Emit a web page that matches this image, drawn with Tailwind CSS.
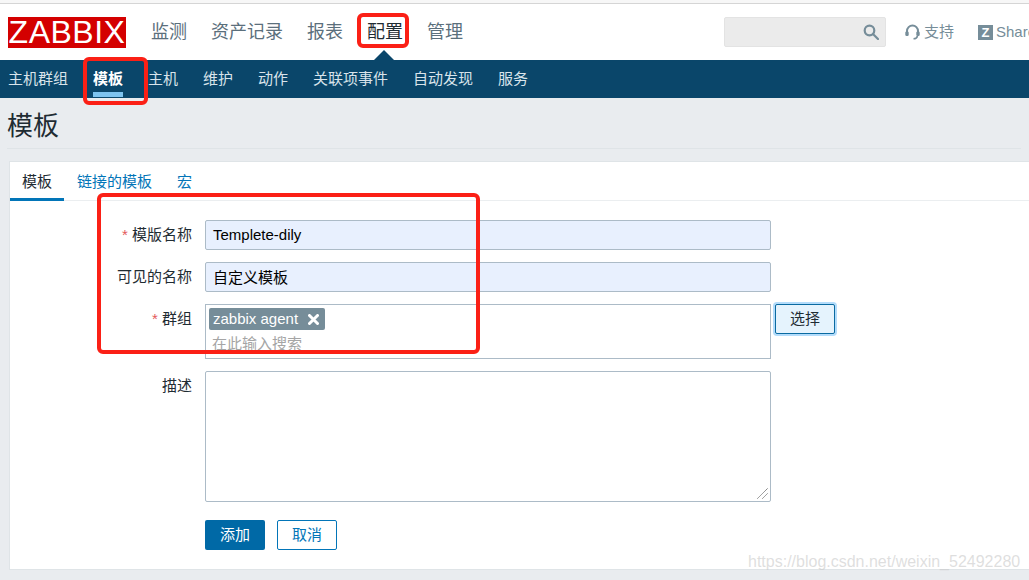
<!DOCTYPE html>
<html>
<head>
<meta charset="utf-8">
<script src="https://cdn.jsdelivr.net/npm/@tailwindcss/browser@4"></script>
</head>
<body class="relative w-[1029px] h-[580px] overflow-hidden bg-[#e9ecef] font-['Liberation_Sans','Noto_Sans_CJK_SC',sans-serif] text-[15px] text-[#1f2c33]">
<div class="h-[4px] bg-[#f7f7f7] border-b border-[#d5d5d5]"></div>
<header class="h-[56px] bg-white flex items-center pl-[8px] relative whitespace-nowrap overflow-hidden">
  <div class="shrink-0 w-[118px] h-[31px] bg-[#d40000] text-white text-[32px] leading-[31px] text-center tracking-[0.5px] font-['Liberation_Sans',sans-serif]">ZABBIX</div>
  <nav class="shrink-0 flex text-[18px] text-[#5b6f7c] ml-[25px] gap-[24px]">
    <span>监测</span><span>资产记录</span><span>报表</span><span class="text-[#1f2c33]">配置</span><span>管理</span>
  </nav>
  <div class="shrink-0 ml-[261px] w-[162px] h-[30px] bg-[#ebebeb] border border-[#e3e3e3] rounded-[2px] flex items-center justify-end pr-[6px]">
    <svg width="16" height="16" viewBox="0 0 16 16" fill="none" stroke="#768d99" stroke-width="2.2"><circle cx="6.5" cy="6.5" r="4.8"/><path d="M10 10l5 5" stroke-linecap="round"/></svg>
  </div>
  <div class="shrink-0 ml-[19px] flex items-center gap-[4px] text-[15px] text-[#768d99]">
    <svg width="15" height="16" viewBox="0 0 15 16" fill="none" stroke="#768d99" stroke-width="2"><path d="M2 10V7a5.5 5.5 0 0 1 11 0v3"/><rect x="0.3" y="7.5" width="3.4" height="4.5" rx="1.2" fill="#768d99" stroke="none"/><rect x="11.3" y="7.5" width="3.4" height="4.5" rx="1.2" fill="#768d99" stroke="none"/><path d="M12.5 12c-.5 2-2 2.8-4 2.8" stroke-width="1.6"/></svg>
    <span>支持</span>
  </div>
  <div class="shrink-0 ml-[24px] flex items-center gap-[3px] text-[15px] text-[#768d99]">
    <span class="w-[15px] h-[15px] bg-[#768d99] text-white text-[13px] leading-[15px] font-bold text-center">Z</span>
    <span>Share</span>
  </div>
</header>
<nav class="relative h-[38px] bg-[#0a466a] flex text-[15px] text-[#d9e4eb] pl-[8px] whitespace-nowrap">
  <div class="flex gap-[25px] items-center h-[38px]">
    <span>主机群组</span>
    <span class="relative text-white font-bold h-full leading-[38px]">模板<i class="absolute left-0 right-0 bottom-[1px] h-[5px] bg-[#7dc3ef]"></i></span>
    <span>主机</span><span>维护</span><span>动作</span><span>关联项事件</span><span>自动发现</span><span>服务</span>
  </div>
  <i class="absolute left-[374px] -top-[10px] w-0 h-0 border-x-[10px] border-x-transparent border-b-[10px] border-b-[#0a466a]"></i>
</nav>
<main class="px-[8px]">
  <h1 class="h-[51px] pt-[11px] -ml-[1px] text-[26px] leading-[34px] font-normal text-[#1f2c33] border-b border-[#dfe4e7]">模板</h1>
  <section class="mt-[12px] -mr-[8px] ml-[1px] h-[409px] bg-white border-y border-l border-[#dfe4e7]">
    <div class="flex h-[39px] border-b border-[#ebeef0] text-[15px] text-[#0275b8]">
      <span class="w-[54px] text-center leading-[40px] text-[#1f2c33] border-b-[3px] border-[#0275b8] h-[39px]">模板</span>
      <span class="ml-[13px] leading-[40px]">链接的模板</span>
      <span class="ml-[25px] leading-[40px]">宏</span>
    </div>
    <form class="pt-[19px] pl-[195px]">
      <div class="relative h-[30px] mb-[12px]">
        <label class="absolute right-[100%] mr-[13px] top-[4px] whitespace-nowrap"><span class="text-[#e45959]">*</span> 模版名称</label>
        <div class="w-[566px] h-[30px] bg-[#e8f0fe] border border-[#acbbc7] rounded-[2px] px-[7px] leading-[28px] text-[15px] text-black">Templete-dily</div>
      </div>
      <div class="relative h-[30px] mb-[12px]">
        <label class="absolute right-[100%] mr-[13px] top-[4px] whitespace-nowrap">可见的名称</label>
        <div class="w-[566px] h-[30px] bg-[#e8f0fe] border border-[#acbbc7] rounded-[2px] px-[7px] leading-[29px] text-[15px] text-black">自定义模板</div>
      </div>
      <div class="relative h-[55px] mb-[12px] flex items-start">
        <label class="absolute right-[100%] mr-[13px] top-[4px] whitespace-nowrap"><span class="text-[#e45959]">*</span> 群组</label>
        <div class="w-[566px] h-[55px] bg-white border border-[#acbbc7] pl-[3px] pt-[3px]">
          <span class="inline-flex items-center w-[116px] h-[22px] bg-[#768d99] text-white text-[15px] rounded-[2px] pl-[4px] leading-[22px]">zabbix agent<svg class="ml-[10px]" width="11" height="11" viewBox="0 0 11 11" stroke="white" stroke-width="3" stroke-linecap="round"><path d="M1.5 1.5l8 8M9.5 1.5l-8 8"/></svg></span>
          <div class="pl-[3px] leading-[20px] mt-[3px] text-[15px] text-[#a5a5a5]">在此输入搜索</div>
        </div>
        <button type="button" class="ml-[4px] w-[60px] h-[30px] bg-[#e5f3fd] border border-[#0a6aa1] rounded-[2px] shadow-[0_0_0_2px_#b3dcfb] text-[15px] text-[#1f2c33]">选择</button>
      </div>
      <div class="relative h-[131px] mb-[18px]">
        <label class="absolute right-[100%] mr-[13px] top-[4px] whitespace-nowrap">描述</label>
        <div class="relative w-[566px] h-[131px] bg-white border border-[#acbbc7] rounded-[2px]">
          <svg class="absolute right-[2px] bottom-[2px]" width="11" height="11" viewBox="0 0 11 11" stroke="#555" stroke-width="1" stroke-dasharray="1 0.5"><path d="M0.5 10.5l10-10M5.5 10.5l5-5"/></svg>
        </div>
      </div>
      <div class="flex gap-[12px]">
        <button type="button" class="w-[60px] h-[30px] bg-[#0069a6] text-white rounded-[2px] text-[15px]">添加</button>
        <button type="button" class="w-[60px] h-[30px] bg-white border border-[#0275b8] text-[#0275b8] rounded-[2px] text-[15px]">取消</button>
      </div>
    </form>
  </section>
</main>
<div class="absolute left-[83px] top-[57px] w-[65px] h-[48px] border-[4px] border-[#fb2016] rounded-[6px]"></div>
<div class="absolute left-[357px] top-[13px] w-[52px] h-[35px] border-[4px] border-[#fb2016] rounded-[6px]"></div>
<div class="absolute left-[97px] top-[193px] w-[383px] h-[161px] border-[4px] border-[#fb2016] rounded-[6px]"></div>
<div class="absolute left-[748px] top-[551px] text-[16px] leading-[22px] text-[#c9c9c9]/60 whitespace-nowrap">https://blog.csdn.net/weixin_52492280</div>
</body>
</html>
